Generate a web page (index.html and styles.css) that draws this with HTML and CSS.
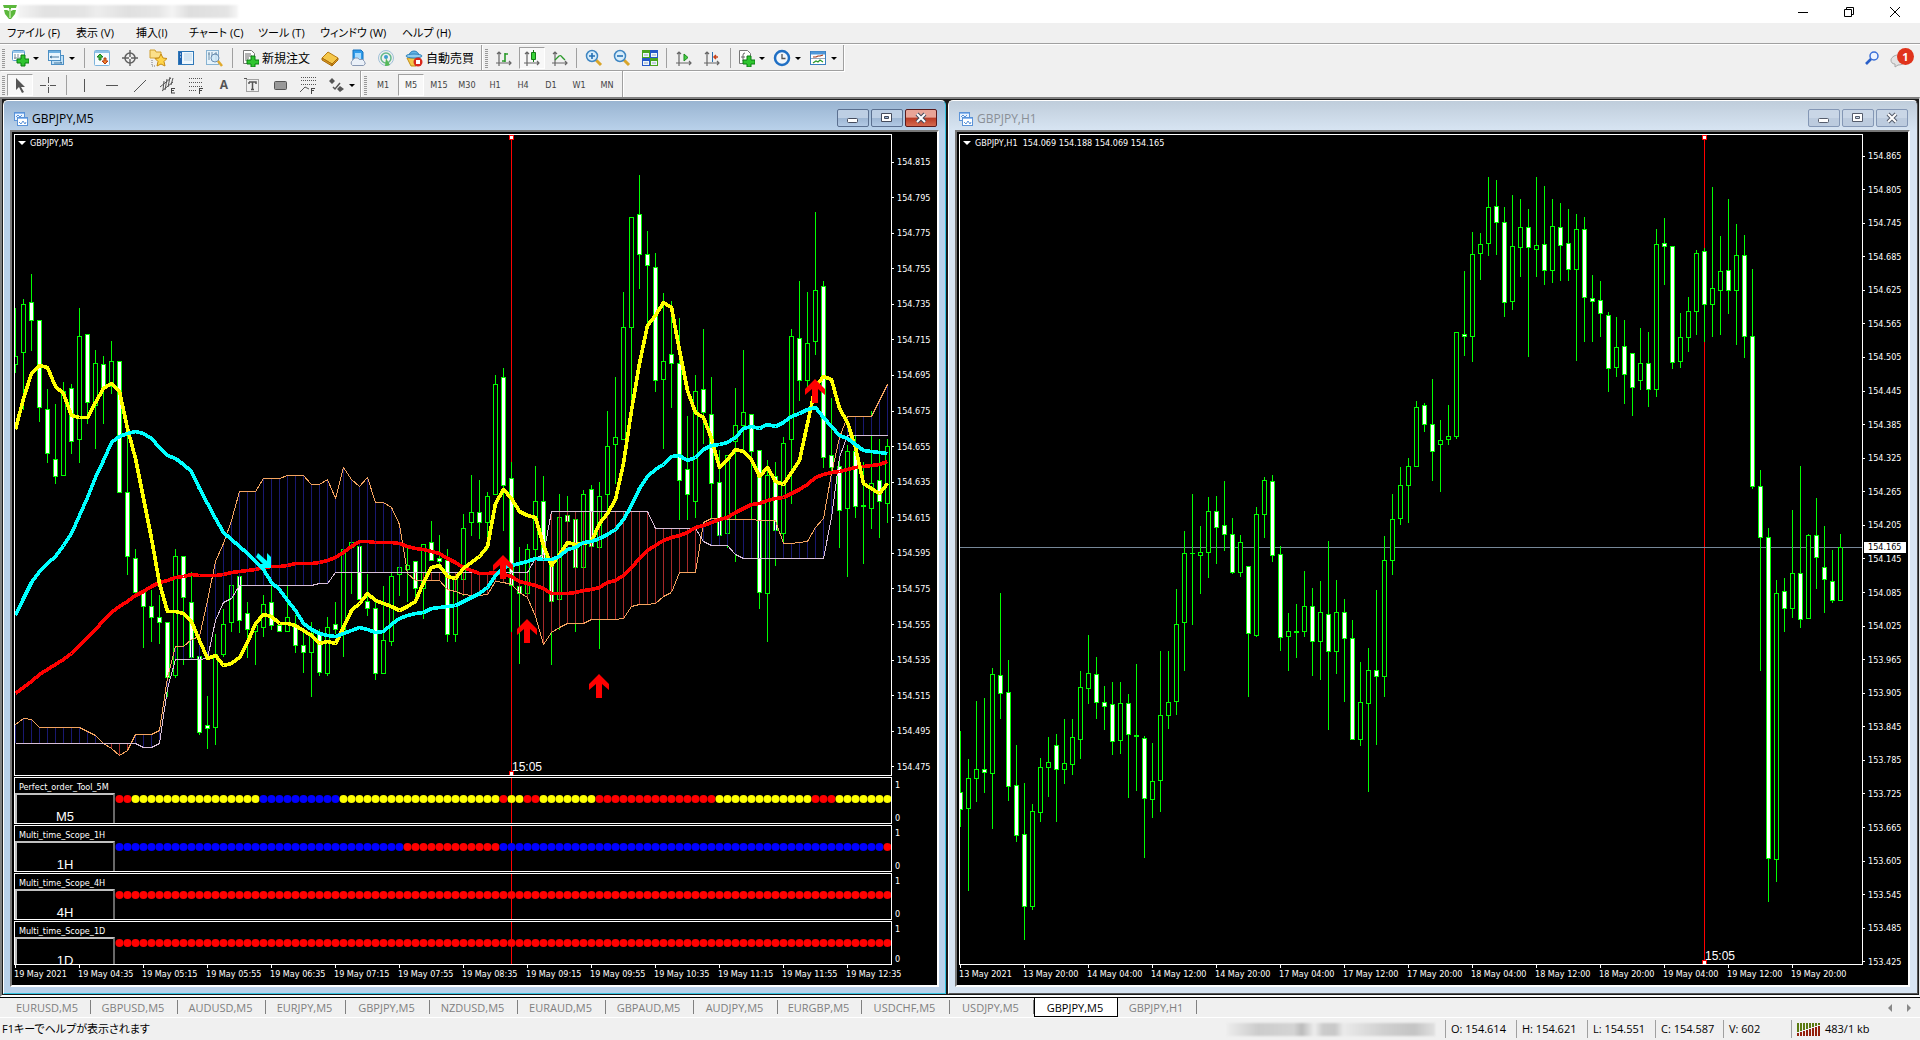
FILE: index.html
```html
<!DOCTYPE html>
<html lang="ja">
<head>
<meta charset="utf-8">
<title>GBPJPY,M5</title>
<link rel="stylesheet" href="styles.css">
</head>
<body>
<div class="app">
  <header class="titlebar">
    <svg class="logo" width="14" height="14" viewBox="0 0 14 14"><path d="M0 0h14l-1 3H8v3l2-1h3l-1 4-4 5H6L2 9 1 5h3l2 1V3H1z" fill="#5cb83c"/><path d="M6 4h2v9H6z" fill="#a4dc8c"/></svg>
    <span class="smudge"></span>
    <div class="sys">
      <button aria-label="最小化"><svg width="12" height="12"><path d="M1 6.500h10" stroke="#000"/></svg></button>
      <button aria-label="元に戻す"><svg width="12" height="12" fill="none" stroke="#000"><path d="M1.500 3.500h7v7h-7zM3.500 3V1.500h7v7H9"/></svg></button>
      <button aria-label="閉じる"><svg width="12" height="12"><path d="M1 1l10 10M11 1L1 11" stroke="#000"/></svg></button>
    </div>
  </header>

  <nav class="menu">
    <a href="#">ファイル (F)</a><a href="#">表示 (V)</a><a href="#">挿入(I)</a><a href="#">チャート (C)</a><a href="#">ツール (T)</a><a href="#">ウィンドウ (W)</a><a href="#">ヘルプ (H)</a>
  </nav>

  <div class="bars">
    <div class="bar">
      <div class="group">
        <i class="grip"></i>
        <button class="tool drop" aria-label="新規チャート"><svg width="18" height="18" viewBox="0 0 18 18"><rect x="1.500" y="1.500" width="12" height="10" rx="1" fill="#fff" stroke="#5b9bd0"/><path d="M2 3h11" stroke="#9cc8ea" stroke-width="2"/><path d="M4 5v5M3 9h7M7 5v3" stroke="#7a8a98"/><path d="M10 6h4v4h4v4h-4v3h-4v-3H6v-4h4z" fill="#2fc52f" stroke="#0b7d13"/></svg></button>
        <button class="tool drop" aria-label="プロファイル"><svg width="18" height="18" viewBox="0 0 18 18"><rect x="4.500" y="6.500" width="12" height="9" fill="#bfe0f7" stroke="#4c8fc4"/><rect x="1.500" y="1.500" width="12" height="10" fill="#e9f5fd" stroke="#4c8fc4"/><path d="M2 3h11" stroke="#6db0e0" stroke-width="2"/><path d="M3 8h9M5 7L3 8l2 1M7 14h8l-2-1" fill="none" stroke="#47799f"/></svg></button>
        <i class="sep"></i>
        <button class="tool" aria-label="気配値表示"><svg width="18" height="18" viewBox="0 0 18 18"><rect x="1.500" y="1.500" width="15" height="15" rx="1" fill="#f7fbfe" stroke="#7db4dc"/><path d="M2 3h14" stroke="#8fc3e8" stroke-width="2"/><path d="M7 5l3 3H8v3H6V8H4z" fill="#3fbf3f" stroke="#1c7a1c"/><path d="M12 15l-3-3h2V9h2v3h2z" fill="#f0822c" stroke="#b43a12"/></svg></button>
        <button class="tool" aria-label="データウィンドウ"><svg width="18" height="18" viewBox="0 0 18 18" fill="none" stroke="#606060"><circle cx="9" cy="9" r="5" stroke-width="1.500"/><path d="M9 1v7M9 10v7M1 9h7M10 9h7" stroke-width="1.400"/></svg></button>
        <button class="tool" aria-label="ナビゲーター"><svg width="18" height="18" viewBox="0 0 18 18"><path d="M1 1h5l1 2h5v6H1z" fill="#fbe08a" stroke="#d0a030"/><path d="M3 11v6h4" fill="none" stroke="#777" stroke-dasharray="1 1"/><path d="M12 5l2 4 4 .5-3 3 1 4.500-4-2-4 2 1-4.500-3-3 4-.5z" fill="#ffd54a" stroke="#c58a14"/></svg></button>
        <button class="tool" aria-label="ターミナル"><svg width="18" height="18" viewBox="0 0 18 18"><rect x="1.500" y="2.500" width="15" height="13" fill="#eef7fd" stroke="#2f78b8"/><path d="M2 3h3v12H2z" fill="#1d63b0"/><path d="M7 5h8M7 7h8M7 9h8M7 11h8" stroke="#b8d2e6"/><path d="M3 5h1M3 8h1" stroke="#fff"/></svg></button>
        <button class="tool" aria-label="ストラテジーテスター"><svg width="18" height="18" viewBox="0 0 18 18"><rect x="1.500" y="1.500" width="12" height="14" fill="#e6f3fb" stroke="#88b3d2"/><path d="M4 3v8M3 5h2M7 3v5M11 3v9M9 5h3" stroke="#6e8fa8"/><circle cx="10" cy="9" r="4" fill="#cfe8f8" fill-opacity=".8" stroke="#6a8db0"/><path d="M13 12l4 5" stroke="#e0a92c" stroke-width="2.500"/></svg></button>
        <i class="sep"></i>
        <button class="tool wide order"><svg width="18" height="18" viewBox="0 0 18 18"><path d="M2.500 1.500h8l3 3v10h-11z" fill="#fff" stroke="#777"/><path d="M4 5h6M4 7h7M4 9h4M4 11h3" stroke="#666"/><path d="M10 7h4v4h4v4h-4v3h-4v-3H6v-4h4z" fill="#2fc52f" stroke="#0b7d13"/></svg><span>新規注文</span></button>
        <button class="tool" aria-label="MetaEditor"><svg width="18" height="18" viewBox="0 0 18 18"><path d="M7 3l10 6-6 6L1 9z" fill="#f5c84c" stroke="#b77b12"/><path d="M1 9v2l10 6v-2zM11 15l6-6v2l-6 6z" fill="#d99820" stroke="#a86b0c"/></svg></button>
        <button class="tool" aria-label="クラウド"><svg width="18" height="18" viewBox="0 0 18 18"><path d="M4 1h8l2 2v8H4z" fill="#2f9bea" stroke="#1673be"/><path d="M6 4h6v6H6z" fill="#a9dcff"/><path d="M3.500 16.500a3 3 0 0 1 0-5 4 4 0 0 1 7-1 4 4 0 0 1 5 2q2 3-1 4z" fill="#eaf0f8" stroke="#8797b2"/></svg></button>
        <button class="tool" aria-label="シグナル"><svg width="18" height="18" viewBox="0 0 18 18" fill="none"><circle cx="9" cy="9" r="7.500" stroke="#9fc0d8"/><circle cx="9" cy="9" r="5" stroke="#64b88a" stroke-width="1.500"/><circle cx="9" cy="8" r="2" fill="#3b9fd0"/><path d="M9 9l4 7a9 9 0 0 1-5 1z" fill="#55b857"/></svg></button>
        <button class="tool wide auto"><svg width="18" height="18" viewBox="0 0 18 18"><path d="M2 9h13l-4 8H6z" fill="#f4c84a" stroke="#c18d18"/><path d="M4 7a5 5 0 0 1 10 0z" fill="#64b5e6" stroke="#2b7fb8"/><ellipse cx="9" cy="7" rx="8" ry="2" fill="#8ccbf0" stroke="#2b7fb8"/><circle cx="13" cy="13" r="4.500" fill="#d8291c"/><path d="M11 11h4v4h-4z" fill="#fff"/></svg><span>自動売買</span></button>
      </div>
      <div class="group">
        <i class="grip"></i>
        <button class="tool" aria-label="バーチャート"><svg width="18" height="18" viewBox="0 0 18 18" fill="none"><path d="M4 3v14M1 14h15M2 5l2-2 2 2M14 12l2 2-2 2" stroke="#666" stroke-width="1.200"/><path d="M10 4v9M10 5h3M7 12h3" stroke="#2a9a2a" stroke-width="1.600"/></svg></button>
        <button class="tool on" aria-label="ローソク足"><svg width="18" height="18" viewBox="0 0 18 18" fill="none"><path d="M4 3v14M1 14h15M2 5l2-2 2 2M14 12l2 2-2 2" stroke="#666" stroke-width="1.200"/><path d="M10.500 1v12" stroke="#147a14"/><path d="M8.500 3.500h4v7h-4z" fill="#36d236" stroke="#147a14"/></svg></button>
        <button class="tool" aria-label="ラインチャート"><svg width="18" height="18" viewBox="0 0 18 18" fill="none"><path d="M4 3v14M1 14h15M2 5l2-2 2 2M14 12l2 2-2 2" stroke="#666" stroke-width="1.200"/><path d="M4 11l4-4q2-1 3 1l3 3" stroke="#2a9a2a" stroke-width="1.300"/></svg></button>
        <i class="sep tight"></i>
        <button class="tool" aria-label="ズームイン"><svg width="18" height="18" viewBox="0 0 18 18"><path d="M11 11l5 5" stroke="#d9a52a" stroke-width="3"/><circle cx="7" cy="7" r="5.500" fill="#d7edfb" stroke="#3f86c2" stroke-width="1.500"/><path d="M4 7h6M7 4v6" stroke="#2670b4" stroke-width="1.600"/></svg></button>
        <button class="tool" aria-label="ズームアウト"><svg width="18" height="18" viewBox="0 0 18 18"><path d="M11 11l5 5" stroke="#d9a52a" stroke-width="3"/><circle cx="7" cy="7" r="5.500" fill="#d7edfb" stroke="#3f86c2" stroke-width="1.500"/><path d="M4 7h6" stroke="#2670b4" stroke-width="1.600"/></svg></button>
        <button class="tool" aria-label="整列"><svg width="18" height="18" viewBox="0 0 18 18"><path d="M1 1h8v8H1zM9 9h8v8H9z" fill="#48a51e"/><path d="M9 1h8v8H9zM1 9h8v8H1z" fill="#2458c8"/><path d="M2 4h6v4H2zM10 4h6v4h-6zM2 12h6v4H2zM10 12h6v4h-6z" fill="#eef6fb"/><path d="M3 6h4M11 6h4M3 14h4M11 14h4" stroke="#9ab"/></svg></button>
        <i class="sep tight"></i>
        <button class="tool" aria-label="自動スクロール"><svg width="18" height="18" viewBox="0 0 18 18" fill="none"><path d="M4 3v14M1 14h15M2 5l2-2 2 2M14 12l2 2-2 2" stroke="#666" stroke-width="1.200"/><path d="M9 5l4 3.500L9 12z" fill="#45d045" stroke="#1c8a1c"/></svg></button>
        <button class="tool" aria-label="チャートシフト"><svg width="18" height="18" viewBox="0 0 18 18" fill="none"><path d="M4 3v14M1 14h15M2 5l2-2 2 2M14 12l2 2-2 2" stroke="#666" stroke-width="1.200"/><path d="M9.500 3v10" stroke="#2a6fae"/><path d="M15 8h-4M13 6l-2 2 2 2" stroke="#c8441c" stroke-width="1.500"/></svg></button>
        <i class="sep"></i>
        <button class="tool drop" aria-label="インディケータ"><svg width="18" height="18" viewBox="0 0 18 18"><path d="M2.500 1.500h8l3 3v10h-11z" fill="#fff" stroke="#777"/><path d="M6 12V6q0-2 2-2M4 8h4" fill="none" stroke="#666"/><path d="M10 7h4v4h4v4h-4v3h-4v-3H6v-4h4z" fill="#2fc52f" stroke="#0b7d13"/></svg></button>
        <button class="tool drop" aria-label="時間足設定"><svg width="18" height="18" viewBox="0 0 18 18"><circle cx="9" cy="9" r="7" fill="#f2f6fa" stroke="#1f6fc4" stroke-width="2.500"/><path d="M9 5v4.500h3.500" fill="none" stroke="#555" stroke-width="1.300"/></svg></button>
        <button class="tool drop" aria-label="定型チャート"><svg width="18" height="18" viewBox="0 0 18 18" fill="none"><rect x="1.500" y="2.500" width="15" height="13" fill="#fff" stroke="#3a7fc0"/><path d="M2 4h14" stroke="#4f97d8" stroke-width="3"/><path d="M2 9.500h14" stroke="#9ab"/><path d="M4 8h3l2-1h2l3-1" stroke="#a33a1c" stroke-width="1.200"/><path d="M4 14l3-2 2 1 2-2 3 2" stroke="#2a9a2a" stroke-width="1.200"/></svg></button>
      </div>
      <div class="right">
        <button class="tool" aria-label="検索"><svg width="14" height="14" viewBox="0 0 14 14" fill="none"><circle cx="9" cy="5" r="4" fill="#eef4ff" stroke="#3a6fd8" stroke-width="1.500"/><path d="M6 8l-5 5" stroke="#2a5fc8" stroke-width="2.600"/></svg></button>
        <button class="bubble" aria-label="通知"><svg width="16" height="14" viewBox="0 0 16 14"><path d="M8 1c4 0 7 2 7 5s-3 5-7 5l-3 2V10C2 10 1 8 1 6s3-5 7-5z" fill="#e3e3e3" stroke="#a8a8a8"/></svg><b>1</b></button>
      </div>
    </div>
    <div class="bar">
      <div class="group draw">
        <i class="grip"></i>
        <button class="tool on" aria-label="カーソル"><svg width="18" height="18" viewBox="0 0 18 18"><path d="M5 2v12l3-3 3 6 2-1-3-5h4z" fill="#555"/></svg></button>
        <button class="tool" aria-label="クロスヘア"><svg width="18" height="18" viewBox="0 0 18 18"><path d="M9.500 1v6M9.500 11v6M1 9.500h6M11 9.500h6M9 9.500h1" stroke="#555"/></svg></button>
        <i class="sep"></i>
        <button class="tool" aria-label="垂直線"><svg width="18" height="18"><path d="M9.500 3v13" stroke="#555"/></svg></button>
        <button class="tool" aria-label="水平線"><svg width="18" height="18"><path d="M3 9.500h12" stroke="#555"/></svg></button>
        <button class="tool" aria-label="トレンドライン"><svg width="18" height="18"><path d="M3 16L15 4" stroke="#555"/></svg></button>
        <button class="tool" aria-label="チャネル"><svg width="18" height="18" viewBox="0 0 18 18"><path d="M1 11L12 2M3 15L14 6M5 5l-1 9M8 3L6 14M11 1L9 11M14 2l-2 7" stroke="#555" fill="none"/><path d="M12.500 12v5M12 12.500h4M12 14.500h3M12 17h4" stroke="#444"/></svg></button>
        <button class="tool" aria-label="フィボナッチ"><svg width="18" height="18" viewBox="0 0 18 18"><path d="M2 2.500h14M2 6.500h14M2 10.500h14M2 14.500h8" stroke="#555" stroke-dasharray="1 1"/><path d="M12.500 12v6M12 12.500h4M12 14.500h3" stroke="#444"/></svg></button>
        <button class="tool letter" aria-label="テキスト">A</button>
        <button class="tool" aria-label="ラベル"><svg width="18" height="18" viewBox="0 0 18 18"><path d="M3.500 3.500h12v12h-12z" fill="none" stroke="#555" stroke-dasharray="1 1"/><path d="M6 6h7v2M6 8V6M9.500 6v8M8 13.500h3" fill="none" stroke="#555" stroke-width="1.500"/><path d="M1 2h3v1H1z" fill="#555"/></svg></button>
        <button class="tool" aria-label="長方形"><svg width="18" height="18"><rect x="3.500" y="5.500" width="12" height="8" rx="1" fill="#999" stroke="#555"/></svg></button>
        <button class="tool" aria-label="フィボナッチ扇"><svg width="18" height="18" viewBox="0 0 18 18"><path d="M2 1.500h15M2 4.500h15M2 8.500h15" stroke="#555" stroke-dasharray="1 1"/><path d="M1 16l5-5 4 2" fill="none" stroke="#555"/><path d="M12.500 12v6M12 12.500h4M12 14.500h3" stroke="#444"/></svg></button>
        <button class="tool drop arrows" aria-label="矢印"><svg width="18" height="18" viewBox="0 0 18 18"><path d="M5 2l3 3-3 3-3-3zM13 10l4 3-4 3-3-3z" fill="#555"/><path d="M6 11l2 2 5-6" fill="none" stroke="#555" stroke-width="1.500"/></svg></button>
      </div>
      <div class="group">
        <i class="grip"></i>
        <button class="tool">M1</button><button class="tool on">M5</button><button class="tool">M15</button><button class="tool">M30</button><button class="tool">H1</button><button class="tool">H4</button><button class="tool">D1</button><button class="tool">W1</button><button class="tool">MN</button>
      </div>
    </div>
  </div>

  <main class="mdi">
    <section class="win active">
      <header class="caption">
        <svg width="14" height="14" viewBox="0 0 14 14"><rect x=".5" y=".5" width="10" height="8" fill="#eaf4ff" stroke="#5b93d8"/><path d="M2 5l2-2 2 2 2-2" fill="none" stroke="#5b93d8"/><rect x="3.500" y="5.500" width="10" height="8" fill="#fff" stroke="#5b93d8"/><path d="M4 6.500h9M1 1.500h9" stroke="#8fbaf0"/><path d="M5 10l2 2 2-3 2 3 1-2" fill="none" stroke="#5b93d8"/></svg>
        <h2>GBPJPY,M5</h2>
        <div class="wbtns">
          <button aria-label="最小化"><svg width="12" height="12"><rect x=".5" y="6.500" width="10" height="4" rx="1" fill="#fff" stroke="#444b5c"/></svg></button>
          <button aria-label="最大化"><svg width="12" height="12"><path d="M.5 1.500h10v8H.5z" fill="#fff" stroke="#444b5c"/><path d="M3.500 4.500h4v2h-4z" fill="#9bb4d2" stroke="#444b5c"/></svg></button>
          <button class="close" aria-label="閉じる"><svg width="12" height="12"><path d="M2 2l8 8M10 2l-8 8" stroke="#444b5c" stroke-width="4"/><path d="M2 2l8 8M10 2l-8 8" stroke="#fff" stroke-width="2"/></svg></button>
        </div>
      </header>
      <div class="client">
        <div class="row main">
          <div class="plot">
            <svg class="canvas"><g id="m5" transform="translate(-15 -135)"></g></svg>
            <p class="info"><i></i>GBPJPY,M5</p>
          </div>
          <ol class="prices" data-from="154.815" data-step="0.02" data-count="18"></ol>
        </div>
        <div class="row sub"><div class="plot"><svg class="canvas dots" data-runs="r2 y16 b10 y20 r1 y2 r2 y7 r15 y12 r3 y7"></svg><p class="name">Perfect_order_Tool_5M</p><div class="tag">M5</div></div><div class="unit"><span>1</span><span>0</span></div></div>
        <div class="row sub"><div class="plot"><svg class="canvas dots" data-runs="b36 r12 b48 r1"></svg><p class="name">Multi_time_Scope_1H</p><div class="tag">1H</div></div><div class="unit"><span>1</span><span>0</span></div></div>
        <div class="row sub"><div class="plot"><svg class="canvas dots" data-runs="r97"></svg><p class="name">Multi_time_Scope_4H</p><div class="tag">4H</div></div><div class="unit"><span>1</span><span>0</span></div></div>
        <div class="row sub last"><div class="plot"><svg class="canvas dots" data-runs="r97"></svg><p class="name">Multi_time_Scope_1D</p><div class="tag">1D</div></div><div class="unit"><span>1</span><span>0</span></div></div>
        <ol class="times"><li>19 May 2021</li><li>19 May 04:35</li><li>19 May 05:15</li><li>19 May 05:55</li><li>19 May 06:35</li><li>19 May 07:15</li><li>19 May 07:55</li><li>19 May 08:35</li><li>19 May 09:15</li><li>19 May 09:55</li><li>19 May 10:35</li><li>19 May 11:15</li><li>19 May 11:55</li><li>19 May 12:35</li></ol>
      </div>
    </section>

    <section class="win">
      <header class="caption">
        <svg width="14" height="14" viewBox="0 0 14 14"><rect x=".5" y=".5" width="10" height="8" fill="#eaf4ff" stroke="#5b93d8"/><path d="M2 5l2-2 2 2 2-2" fill="none" stroke="#5b93d8"/><rect x="3.500" y="5.500" width="10" height="8" fill="#fff" stroke="#5b93d8"/><path d="M4 6.500h9M1 1.500h9" stroke="#8fbaf0"/><path d="M5 10l2 2 2-3 2 3 1-2" fill="none" stroke="#5b93d8"/></svg>
        <h2>GBPJPY,H1</h2>
        <div class="wbtns">
          <button aria-label="最小化"><svg width="12" height="12"><rect x=".5" y="6.500" width="10" height="4" rx="1" fill="#fff" stroke="#555c6c"/></svg></button>
          <button aria-label="最大化"><svg width="12" height="12"><path d="M.5 1.500h10v8H.5z" fill="#fff" stroke="#555c6c"/><path d="M3.500 4.500h4v2h-4z" fill="#c8d6e6" stroke="#555c6c"/></svg></button>
          <button aria-label="閉じる"><svg width="12" height="12"><path d="M2 2l8 8M10 2l-8 8" stroke="#555c6c" stroke-width="4"/><path d="M2 2l8 8M10 2l-8 8" stroke="#fff" stroke-width="2"/></svg></button>
        </div>
      </header>
      <div class="client">
        <div class="row main">
          <div class="plot">
            <svg class="canvas"><g id="h1" transform="translate(-960 -135)"></g></svg>
            <p class="info"><i></i>GBPJPY,H1&nbsp; 154.069 154.188 154.069 154.165</p>
          </div>
          <ol class="prices hour" data-from="154.865" data-step="0.06" data-count="25"></ol>
          <span class="bid">154.165</span>
        </div>
        <ol class="times"><li>13 May 2021</li><li>13 May 20:00</li><li>14 May 04:00</li><li>14 May 12:00</li><li>14 May 20:00</li><li>17 May 04:00</li><li>17 May 12:00</li><li>17 May 20:00</li><li>18 May 04:00</li><li>18 May 12:00</li><li>18 May 20:00</li><li>19 May 04:00</li><li>19 May 12:00</li><li>19 May 20:00</li></ol>
      </div>
    </section>
  </main>

  <nav class="tabs">
    <button>EURUSD,M5</button><button>GBPUSD,M5</button><button>AUDUSD,M5</button><button>EURJPY,M5</button><button>GBPJPY,M5</button><button>NZDUSD,M5</button><button>EURAUD,M5</button><button>GBPAUD,M5</button><button>AUDJPY,M5</button><button>EURGBP,M5</button><button>USDCHF,M5</button><button>USDJPY,M5</button><button class="current">GBPJPY,M5</button><button>GBPJPY,H1</button>
    <div class="scroll"><svg width="4" height="8"><path d="M4 0v8L0 4z" fill="#888"/></svg><svg width="4" height="8"><path d="M0 0v8l4-4z" fill="#888"/></svg></div>
  </nav>

  <footer class="status">
    <span class="help">F1キーでヘルプが表示されます</span>
    <span class="smudge"></span>
    <span class="cell">O: 154.614</span><span class="cell">H: 154.621</span><span class="cell c3">L: 154.551</span><span class="cell c3">C: 154.587</span><span class="cell c3">V: 602</span>
    <span class="cell net"><svg width="24" height="13" viewBox="0 0 24 13"><path d="M1 0v9M4 0v8M7 0v7M10 0v6M13 0v5M16 0v4M19 0v3M22 0v2" stroke="#5a7a10" stroke-width="2"/><path d="M1 10v3M4 9v4M7 8v5M10 7v6M13 6v7M16 5v8M19 4v9M22 3v10" stroke="#94200c" stroke-width="2"/></svg>483/1 kb</span>
  </footer>
</div>
<script src="script.js"></script>
</body>
</html>
```
FILE: styles.css
```css
* { box-sizing: border-box; }
html, body { height: 100%; }
body {
  margin: 0;
  background: #f0f0f0;
  color: #000;
  font: 11px/16px "Open Sans", "Noto Sans CJK JP", sans-serif;
  font-feature-settings: "palt";
}
button { margin: 0; padding: 0; border: 0; background: none; color: inherit; font: inherit; }
ol, p, h2 { margin: 0; padding: 0; list-style: none; font-size: inherit; font-weight: normal; }
svg { display: block; flex: none; }

.app { display: flex; flex-direction: column; height: 100vh; min-height: 600px; overflow: hidden; }
.app > * { flex: none; }

/* title bar and menu */
.titlebar { display: flex; align-items: center; height: 23px; padding-left: 3px; background: #fff; }
.smudge { width: 220px; height: 13px; background: linear-gradient(90deg, #f4f4f4, #e2e2e2 12%, #e4e4e4 30%, #ededed 36%, #e0e0e0 50%, #e6e6e6 64%, #f4f4f4 70%, #dedede 78%, #e4e4e4 95%, #f6f6f6); filter: blur(1px); }
.titlebar .smudge { margin-left: 1px; }
.sys { display: flex; margin-left: auto; padding-right: 2px; }
.sys button { display: grid; place-items: center; width: 46px; height: 20px; }
.menu { display: grid; grid-template-columns: 69px 60px 53px 69px 62px 82px 1fr; height: 20px; padding-left: 7px; align-items: center; }
.menu a { color: inherit; text-decoration: none; white-space: nowrap; }

/* toolbars */
.bars { border-top: 1px solid #a0a0a0; }
.bar { display: flex; height: 27px; border-top: 1px solid #fff; }
.bar + .bar { height: 26px; border-top: 0; }
.group { display: flex; align-items: stretch; border-right: 1px solid #a0a0a0; border-bottom: 1px solid #a0a0a0; box-shadow: 1px 1px #fff; padding-top: 1px; }
.bar:first-child .group:first-child { width: 482px; }
.bar:first-child .group + .group { padding-right: 1px; }
.bar + .bar .group { border-bottom: 0; box-shadow: 1px 0 #fff; padding: 2px 1px 0 0; }
.bar + .bar .draw { padding-right: 0; }
.grip { width: 3px; margin: 3px 3px 2px 2px; background: repeating-linear-gradient(#999 0 1px, #f0f0f0 1px 2px); }
.group + .group .grip { margin-left: 3px; margin-right: 2px; }
.group.draw .grip { margin-right: 1px; }
.tool { display: flex; align-items: center; justify-content: center; width: 28px; color: #444; font: 9px/12px "DejaVu Sans Condensed", "DejaVu Sans", sans-serif; }
.tool.on { width: 26px; margin: 1px; border: 1px solid; border-color: #a0a0a0 #fff #fff #a0a0a0; background: #f8f8f8; }
.drop { width: 36px; justify-content: flex-start; gap: 4px; padding-left: 3px; }
.drop::after { content: ""; border: 3px solid transparent; border-top-color: #000; border-bottom: 0; }
.arrows { width: 38px; padding-left: 5px; }
.wide { justify-content: flex-start; gap: 3px; padding-left: 5px; color: #000; font: 12px/16px "Noto Sans CJK JP", sans-serif; }
.order { width: 80px; }
.auto { width: 78px; }
.sep { width: 8px; margin: 2px 0; background: linear-gradient(90deg, transparent 4px, #a0a0a0 4px 5px, transparent 5px); }
.sep.tight { width: 6px; background: linear-gradient(90deg, transparent 2px, #a0a0a0 2px 3px, transparent 3px); }
.letter { font: bold 12px/12px "Open Sans", sans-serif; color: #555; }
.right { display: flex; align-items: center; gap: 4px; margin-left: auto; padding-right: 6px; }
.bubble { position: relative; width: 24px; height: 20px; padding-top: 6px; }
.bubble b { position: absolute; top: 0; right: 0; width: 17px; height: 17px; border-radius: 9px; background: #e0341c; color: #fff; font: bold 11px/17px "Open Sans", sans-serif; text-align: center; }

/* chart windows */
.app > .mdi {
  flex: 1 1 0;
  min-height: 0;
  display: grid;
  grid-template-columns: minmax(0, 943fr) minmax(0, 970fr);
  grid-template-rows: minmax(0, 1fr);
  gap: 2px;
  padding: 1px;
  border: solid;
  border-width: 2px 1px 2px 2px;
  border-color: #808080 #e3e3e3 #fff #808080;
  background: #1a1a1a;
}
.win {
  display: flex;
  flex-direction: column;
  padding: 0 7px 6px 6px;
  border: 1px solid;
  border-color: #fff #555 #555 #fff;
  border-radius: 5px 5px 0 0;
  background: linear-gradient(#bfcddb, #d7e4f2 29px);
}
.win.active { padding-right: 6px; border-color: #fff #35c3e0 #35c3e0 #fff; background: linear-gradient(#99b4d1, #b9d1ea 29px); }
.caption { flex: none; display: flex; align-items: center; gap: 4px; height: 29px; padding: 6px 2px 0 4px; color: #8a8f96; }
.active .caption { color: #000; }
.caption h2 { font-size: 12px; }
.wbtns { display: flex; gap: 2px; margin-left: auto; align-self: flex-start; padding-top: 2px; }
.wbtns button { display: grid; place-items: center; width: 32px; height: 18px; border: 1px solid #8497b5; border-radius: 2px; background: linear-gradient(#c9d6e6 50%, #bccbde 50%); }
.active .wbtns button { border-color: #5b7090; background: linear-gradient(#bdcfe4 50%, #9db6d3 50%, #b2c9e4); }
.active .wbtns .close { border-color: #5a1a1c; background: linear-gradient(#e8a497 45%, #b93a24 50%, #d56a50); }
.client {
  flex: 1;
  min-height: 0;
  display: flex;
  flex-direction: column;
  gap: 1px;
  padding: 2px 0 0 2px;
  border: 2px solid;
  border-color: #777 #fff #fff #777;
  background: #000;
  color: #fff;
  font: 9px/12px "DejaVu Sans Condensed", "DejaVu Sans", sans-serif;
}
.row { position: relative; flex: none; display: grid; grid-template-columns: minmax(0, 1fr) 45px; height: 47px; }
.row.main { flex: 1; height: auto; min-height: 200px; }
.row.last { height: 44px; }
.plot { position: relative; display: flex; flex-direction: column; border: 1px solid #fff; overflow: hidden; }
.canvas { position: absolute; inset: 0; width: 100%; height: 100%; }
.info { position: relative; display: flex; align-items: center; gap: 4px; padding: 2px 3px; }
.info i { border: 4px solid transparent; border-top-color: #fff; border-bottom: 0; }
.prices { display: flex; flex-direction: column; justify-content: space-between; padding: 22px 0 3px; }
.prices.hour { padding: 16px 0 0; margin-bottom: -3px; }
.prices li, .unit span { display: flex; align-items: center; gap: 3px; }
.prices li::before { content: ""; width: 2px; height: 1px; background: #fff; }
.bid { position: absolute; top: 408px; right: 2px; width: 42px; padding-left: 4px; background: #fff; color: #000; line-height: 11px; }
.unit { display: flex; flex-direction: column; justify-content: space-between; padding: 2px 3px 0; }
.name { position: relative; flex: none; height: 15px; padding: 3px 4px 0; white-space: nowrap; }
.tag { position: relative; flex: 1; min-height: 0; width: 100px; padding-top: 17px; border: solid; border-width: 2px 2px 0; border-color: #c0c0c0 #696969 #c0c0c0 #c0c0c0; text-align: center; font: 13px/10px "Liberation Sans", sans-serif; }
.times { flex: none; display: flex; height: 20px; margin-top: -1px; }
.times li { flex: none; width: 64px; padding-top: 3px; white-space: nowrap; background: linear-gradient(#fff, #fff) 1px 0 / 1px 3px no-repeat; }

/* chart tabs */
.tabs { display: grid; grid-template-columns: 91px 87px 88px 80px 84px 88px 88px 88px 84px 84px 88px 84px 84px 79px 1fr; height: 20px; border-top: 1px solid #000; color: #808080; }
.tabs button { height: 14px; margin-top: 2px; padding-right: 2px; border-right: 1px solid #808080; line-height: 13px; white-space: nowrap; }
.tabs button:first-child { padding-left: 6px; }
.tabs .current { height: 19px; margin-top: 0; border: 1px solid #000; border-top: 0; background: #fff; color: #000; line-height: 17px; }
.scroll { display: flex; gap: 15px; justify-content: flex-end; align-items: center; padding-right: 9px; }

/* status bar */
.status { display: flex; align-items: center; height: 23px; border-top: 1px solid #fff; }
.help { margin-right: auto; padding-left: 2px; }
.status .smudge { width: 208px; margin-right: 10px; background: linear-gradient(90deg, #ececec, #ccc 15%, #d4d4d4 32%, #bbb 36%, #eee 42%, #ccc 46%, #c8c8c8 52%, #eaeaea 56%, #d0d0d0 75%, #c4c4c4 90%, #e0e0e0); }
.cell { display: flex; align-items: center; gap: 4px; width: 71px; height: 18px; padding-left: 5px; border-left: 1px solid #a0a0a0; white-space: nowrap; }
.c3 { width: 68px; }
.net { width: 129px; }

/* chart drawing */
.up { fill: #0f0; }
.bull { fill: #000; }
.bear { fill: #fff; }
.crisp { shape-rendering: crispEdges; }
.mark { font: 12px "Liberation Sans", sans-serif; fill: #fff; }
```
FILE: script.js
```js
// Each candle: high, body top, body bottom, low, and 1 when the body is filled.
const M5 = `308 356 365 373 0|299 304 353 410 0|274 302 321 351 1|320 320 408 422 1|389 409 454 463 1|404 459 477 484 1|382 391 476 476 0|384 388 442 454 1|308 336 440 463 0|334 334 403 424 1|350 363 406 449 0|356 364 388 424 1|341 361 387 394 0|361 361 493 493 1|430 492 557 575 1|549 558 593 597 1|590 592 607 648 1|590 606 618 642 1|595 617 623 644 1|622 622 678 697 1|549 556 676 678 0|556 556 598 665 1|572 602 658 658 1|656 656 733 735 1|696 725 729 749 1|634 654 728 745 0|609 624 655 657 0|585 585 623 632 0|576 576 621 633 1|602 613 630 658 1|625 625 632 665 0|595 604 628 637 0|586 602 626 630 1|625 625 632 632 1|586 617 632 632 0|615 625 646 653 1|630 645 653 673 1|622 633 653 697 0|629 634 673 676 1|617 627 674 676 0|602 624 630 634 1|549 549 635 657 0|542 542 548 594 0|546 546 600 600 1|574 601 609 616 1|602 608 674 680 1|586 640 674 674 0|573 576 642 646 0|567 567 575 596 0|547 565 570 602 0|561 561 589 600 1|544 544 589 619 0|521 542 561 561 1|535 558 562 567 1|549 560 635 642 1|579 579 635 642 0|514 528 580 596 0|475 512 523 536 0|480 512 523 539 1|492 496 523 550 0|375 384 495 495 0|368 377 486 531 1|462 478 586 632 1|547 586 594 664 1|544 549 594 597 0|466 501 550 558 0|476 501 560 560 1|557 560 602 665 1|494 517 600 630 0|496 515 522 522 1|516 519 568 632 1|490 494 568 568 0|485 489 547 547 1|482 496 548 649 0|411 446 495 510 0|377 437 445 484 0|292 327 440 440 0|217 217 328 400 0|175 214 255 289 1|231 254 266 323 1|253 267 381 392 1|293 361 380 449 0|301 354 364 408 1|318 363 481 520 1|416 469 495 520 1|375 391 502 518 0|329 389 413 444 1|377 414 484 520 1|450 482 536 536 1|455 455 534 548 0|388 425 442 562 0|350 412 426 450 0|414 414 452 520 1|450 450 593 609 1|460 475 594 642 0|462 476 531 566 1|437 443 534 542 0|329 336 440 504 0|281 338 381 401 1|292 343 381 390 0|212 290 342 355 0|281 286 458 468 1|398 455 468 480 1|460 466 511 548 1|445 451 509 577 0|436 451 507 518 1|462 505 507 564 0|411 483 509 529 0|439 480 502 538 1|439 446 504 523 0`;
const H1 = `731 792 810 827 1|759 778 809 891 0|701 769 779 802 0|698 769 773 793 1|668 674 774 829 0|593 675 694 719 1|660 692 787 801 1|745 785 836 842 1|783 834 907 940 1|804 811 907 910 0|758 767 813 822 0|737 762 768 797 0|734 745 770 822 1|719 763 770 784 0|719 737 765 775 0|671 687 740 759 0|635 673 689 704 0|657 674 703 719 1|686 702 707 730 1|682 704 742 755 1|682 703 741 754 0|694 703 735 798 1|664 735 737 791 0|736 738 799 858 1|743 781 800 818 0|651 715 781 812 0|651 702 716 729 0|589 624 702 715 0|531 553 623 671 0|494 553 554 625 0|526 552 556 594 0|497 511 553 578 0|496 511 528 564 1|481 525 535 551 1|518 534 573 574 1|535 542 573 577 0|566 566 634 697 1|507 514 636 637 0|477 480 515 538 0|475 481 556 562 1|546 554 638 651 1|613 631 637 671 0|604 631 633 658 0|571 606 632 637 0|588 606 642 676 1|581 612 642 680 0|541 614 652 730 1|580 612 652 674 0|599 612 639 702 1|620 638 740 740 1|662 702 740 746 0|648 670 704 792 0|590 670 677 745 1|536 560 677 697 0|494 519 561 575 0|467 485 519 525 0|458 466 486 523 0|401 407 467 467 0|403 405 425 432 1|379 424 452 481 1|420 440 445 492 0|405 436 440 445 0|332 332 437 439 0|271 334 337 356 1|232 254 337 362 0|233 244 254 280 0|177 207 244 256 0|180 206 223 255 1|207 222 303 317 1|195 246 302 310 0|199 227 248 277 0|209 227 248 357 1|177 245 250 277 0|186 244 271 285 1|199 226 271 283 0|203 227 246 281 1|209 243 270 281 1|214 229 270 361 0|217 229 298 342 1|275 298 302 342 1|281 300 314 337 1|312 315 369 392 1|317 347 368 377 0|320 346 375 404 1|353 353 388 416 1|328 363 381 390 0|332 363 390 407 1|229 244 390 397 0|218 243 247 285 1|246 246 363 369 1|313 337 362 368 0|297 311 338 352 0|250 253 312 335 0|248 251 305 342 1|187 288 305 337 0|236 271 291 335 0|199 270 291 314 1|224 255 291 345 0|235 255 337 358 1|269 336 487 489 1|470 486 538 671 1|528 537 859 902 1|580 593 860 882 0|578 591 609 632 1|510 573 609 618 0|466 573 620 628 1|534 535 619 619 0|498 535 558 589 1|526 567 580 613 1|550 581 601 603 1|534 547 601 601 0`;

// Indicator lines, one value per candle.
const FAST = "429 398 373 365 367 386 393 415 417 417 402 388 383 391 428 458 498 538 583 611 611 613 621 640 658 655 665 663 657 642 623 614 616 623 623 625 630 635 643 641 643 627 610 603 593 600 603 606 610 606 601 582 567 565 576 578 568 562 556 546 503 489 498 511 515 517 545 565 554 542 544 543 541 523 513 499 463 410 363 325 315 302 307 350 390 412 417 438 467 459 449 451 459 476 467 481 484 472 460 423 386 376 379 408 422 447 483 488 493 483";
const MID = "615 598 582 571 563 556 545 533 515 497 477 460 442 436 433 431 433 438 447 455 458 464 471 488 503 518 532 539 546 553 561 569 582 589 600 610 623 629 633 635 636 633 630 627 629 632 631 624 618 615 613 612 608 607 606 605 601 597 593 587 575 567 565 563 561 558 559 559 556 549 547 542 541 538 534 529 519 505 488 476 469 464 456 455 460 457 449 445 444 442 437 428 426 428 424 426 422 416 413 409 407 417 426 435 438 444 450 451 452 453";
const SLOW = "693 687 681 674 669 664 659 653 645 637 629 620 612 606 601 595 591 586 582 580 577 576 574 575 575 575 574 572 571 570 569 567 566 566 565 563 563 563 562 560 557 552 546 541 541 542 542 542 543 546 548 549 551 553 558 562 567 570 573 573 572 574 576 581 583 585 588 593 593 593 592 590 589 587 582 580 575 567 558 550 545 540 537 535 532 527 525 522 519 517 512 508 504 503 500 498 497 493 489 484 477 474 472 471 469 467 466 465 464 461";
const expand = s => s.split(" ").flatMap(p => { const [v, n] = p.split("*"); return Array(+(n || 1)).fill(+v); });
const SPAN_A = expand("724 718 719 727*6 731 735 743 748 755 750 734*3 730 677 646*2 639 636 600 561 543 520 491*3 478*3 475*3 484*2 479 498 467 479 486 477 502*2 507 524 573 580*4 589 591 594 595*2 594 581 582 584 592 597 616 644 632 627 623*3 619*4 618 606 604*2 603 596 592 572*3 522 518*2 519*4 520*3 543*2 542 541 527 518 473 437 416*4 400 384");
const SPAN_B = expand("743*16 747*2 743 688 659*4 658 620 602 598 585*10 583*2 572*25 558 554 511*13 528*6 541 545*3 554 558*11 517 457 435*6");

const NS = "http://www.w3.org/2000/svg";
function add(parent, tag, attrs, text) {
  const el = document.createElementNS(NS, tag);
  for (const k in attrs) el.setAttribute(k, attrs[k]);
  if (text) el.textContent = text;
  parent.append(el);
}
const box = (x, y, w, h) => `M${x} ${y}h${w}v${h}h${-w}z`;

function candles(svg, data, x0) {
  let line = "", hollow = "", full = "";
  data.split("|").forEach((row, i) => {
    const [hi, top, bottom, lo, fill] = row.split(" ").map(Number);
    const x = x0 + i * 8;
    line += box(x, hi, 1, lo - hi) + box(x - 2, top, 5, bottom - top);
    if (bottom - top < 3) return;
    const inner = box(x - 1, top + 1, 3, bottom - top - 2);
    if (fill) full += inner; else hollow += inner;
  });
  add(svg, "path", { d: line, class: "up crisp" });
  add(svg, "path", { d: hollow, class: "bull crisp" });
  add(svg, "path", { d: full, class: "bear crisp" });
}
function curve(svg, values, color, width) {
  add(svg, "polyline", { points: values.map((v, i) => `${15.5 + i * 8},${v + 0.5}`).join(" "), fill: "none", stroke: color, "stroke-width": width, "stroke-linejoin": "round", class: "crisp" });
}
function timeLine(svg, x, bottom) {
  add(svg, "path", { d: box(x, 135, 1, bottom - 135), fill: "#f00", class: "crisp" });
}
function handles(svg, x, bottom) {
  for (const y of [135, bottom - 4]) {
    add(svg, "path", { d: box(x - 2, y, 5, 5), fill: "#f00", class: "crisp" });
    add(svg, "path", { d: box(x - 1, y + 1, 3, 3), fill: "#fff", class: "crisp" });
  }
  add(svg, "text", { x: x + 1, y: bottom - 4, class: "mark" }, "15:05");
}

const m5 = document.getElementById("m5");
timeLine(m5, 511, 775);
candles(m5, M5, 15);
let rising = "", falling = "";
SPAN_A.forEach((a, i) => {
  const b = SPAN_B[i], bar = box(15 + i * 8, Math.min(a, b), 1, Math.abs(a - b));
  if (a < b) rising += bar; else falling += bar;
});
add(m5, "path", { d: rising, fill: "#191970", class: "crisp" });
add(m5, "path", { d: falling, fill: "#a52a2a", class: "crisp" });
curve(m5, SPAN_A, "#f4a460", 1);
curve(m5, SPAN_B, "#d8bfd8", 1);
curve(m5, SLOW.split(" ").map(Number), "#f00", 3.6);
curve(m5, FAST.split(" ").map(Number), "#ff0", 3.6);
curve(m5, MID.split(" ").map(Number), "#0ff", 3.6);
for (const [x, y] of [[503, 555], [527, 619], [599, 674], [815, 379]])
  add(m5, "path", { d: `M${x} ${y}l10 10v6l-7-6v14h-6v-14l-7 6v-6z`, fill: "#f00" });
add(m5, "path", { d: "M258 553L267 561V553L271 557V568H261L257 564H263L256 557Z", fill: "#0ff" });
handles(m5, 511, 775);

const h1 = document.getElementById("h1");
timeLine(h1, 1704, 964);
add(h1, "path", { d: box(960, 547, 902, 1), fill: "#778899", class: "crisp" });
candles(h1, H1, 960);
handles(h1, 1704, 964);

// Signal dots: runs of one colour, for example "r2 y16".
const COLORS = { r: "#f00", y: "#ff0", b: "#00f" };
document.querySelectorAll(".dots").forEach(svg => {
  add(svg, "path", { d: box(496, 0, 1, 60), fill: "#f00", class: "crisp" });
  let n = 0;
  svg.dataset.runs.split(" ").forEach(run => {
    for (let k = 0; k < +run.slice(1); k++, n++)
      add(svg, "circle", { cx: 104.5 + n * 8, cy: 21, r: 4, fill: COLORS[run[0]] });
  });
});

document.querySelectorAll(".prices").forEach(list => {
  const { from, step, count } = list.dataset;
  for (let i = 0; i < count; i++) {
    const li = document.createElement("li");
    li.textContent = (from - step * i).toFixed(3);
    list.append(li);
  }
});
```
